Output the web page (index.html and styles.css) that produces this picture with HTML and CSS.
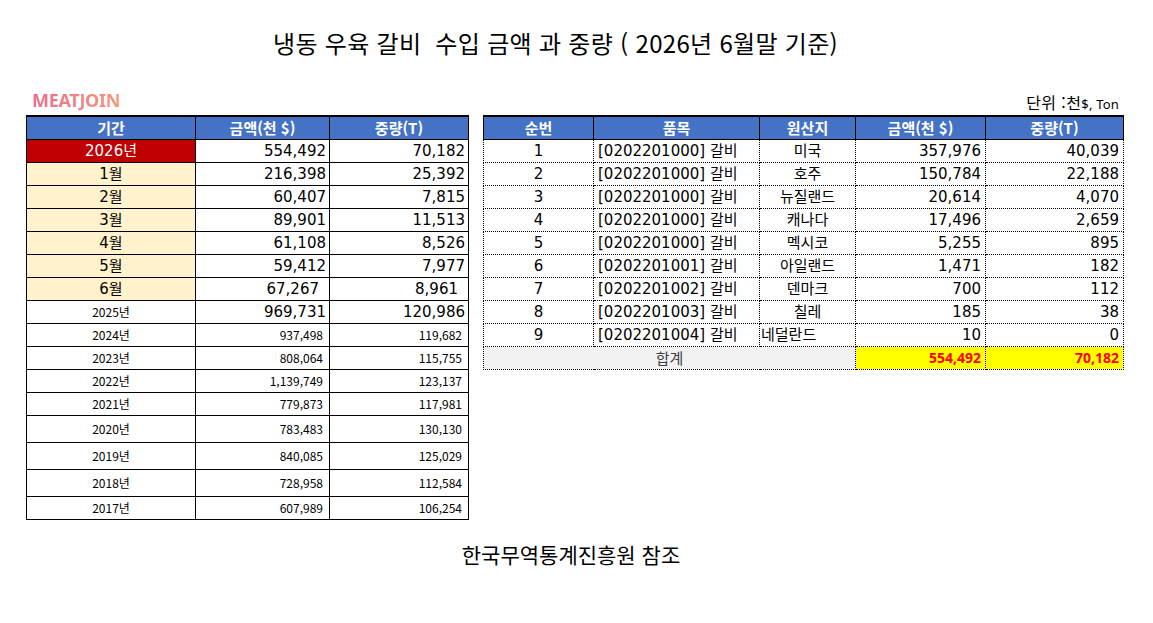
FILE: index.html
```html
<!DOCTYPE html>
<html lang="ko">
<head>
<meta charset="utf-8">
<title>냉동 우육 갈비 수입 금액 과 중량</title>
<link rel="stylesheet" href="styles.css">
</head>
<body>
<div class="page">
  <h1 class="title">냉동 우육 갈비&nbsp; 수입 금액 과 중량 ( 2026년 6월말 기준)</h1>
  <div class="main">
    <div class="left">
      <div class="logo">MEATJOIN</div>
      <table class="tbl-left">
        <colgroup><col class="c1"><col class="c2"><col class="c3"></colgroup>
        <thead>
          <tr><th>기간</th><th>금액(천 $)</th><th>중량(T)</th></tr>
        </thead>
        <tbody>
          <tr class="big"><td class="cur">2026년</td><td class="num">554,492</td><td class="num">70,182</td></tr>
          <tr class="big"><td class="mon">1월</td><td class="num">216,398</td><td class="num">25,392</td></tr>
          <tr class="big"><td class="mon">2월</td><td class="num">60,407</td><td class="num">7,815</td></tr>
          <tr class="big"><td class="mon">3월</td><td class="num">89,901</td><td class="num">11,513</td></tr>
          <tr class="big"><td class="mon">4월</td><td class="num">61,108</td><td class="num">8,526</td></tr>
          <tr class="big"><td class="mon">5월</td><td class="num">59,412</td><td class="num">7,977</td></tr>
          <tr class="big"><td class="mon">6월</td><td class="num trail">67,267</td><td class="num trail">8,961</td></tr>
          <tr class="mixed"><td class="yr">2025년</td><td class="num">969,731</td><td class="num">120,986</td></tr>
          <tr class="small"><td>2024년</td><td class="num">937,498</td><td class="num">119,682</td></tr>
          <tr class="small"><td>2023년</td><td class="num">808,064</td><td class="num">115,755</td></tr>
          <tr class="small"><td>2022년</td><td class="num">1,139,749</td><td class="num">123,137</td></tr>
          <tr class="small"><td>2021년</td><td class="num">779,873</td><td class="num">117,981</td></tr>
          <tr class="small tall"><td>2020년</td><td class="num">783,483</td><td class="num">130,130</td></tr>
          <tr class="small tall"><td>2019년</td><td class="num">840,085</td><td class="num">125,029</td></tr>
          <tr class="small tall"><td>2018년</td><td class="num">728,958</td><td class="num">112,584</td></tr>
          <tr class="small last"><td>2017년</td><td class="num">607,989</td><td class="num">106,254</td></tr>
        </tbody>
      </table>
    </div>
    <div class="right">
      <div class="unit">단위 :천<span class="unit-sm">$, Ton</span></div>
      <table class="tbl-right">
        <colgroup><col class="r1"><col class="r2"><col class="r3"><col class="r4"><col class="r5"></colgroup>
        <thead>
          <tr><th>순번</th><th>품목</th><th>원산지</th><th>금액(천 $)</th><th>중량(T)</th></tr>
        </thead>
        <tbody>
          <tr><td class="ctr">1</td><td class="item">[0202201000] 갈비</td><td class="ctr">미국</td><td class="num">357,976</td><td class="num">40,039</td></tr>
          <tr><td class="ctr">2</td><td class="item">[0202201000] 갈비</td><td class="ctr">호주</td><td class="num">150,784</td><td class="num">22,188</td></tr>
          <tr><td class="ctr">3</td><td class="item">[0202201000] 갈비</td><td class="ctr">뉴질랜드</td><td class="num">20,614</td><td class="num">4,070</td></tr>
          <tr><td class="ctr">4</td><td class="item">[0202201000] 갈비</td><td class="ctr">캐나다</td><td class="num">17,496</td><td class="num">2,659</td></tr>
          <tr><td class="ctr">5</td><td class="item">[0202201000] 갈비</td><td class="ctr">멕시코</td><td class="num">5,255</td><td class="num">895</td></tr>
          <tr><td class="ctr">6</td><td class="item">[0202201001] 갈비</td><td class="ctr">아일랜드</td><td class="num">1,471</td><td class="num">182</td></tr>
          <tr><td class="ctr">7</td><td class="item">[0202201002] 갈비</td><td class="ctr">덴마크</td><td class="num">700</td><td class="num">112</td></tr>
          <tr><td class="ctr">8</td><td class="item">[0202201003] 갈비</td><td class="ctr">칠레</td><td class="num">185</td><td class="num">38</td></tr>
          <tr><td class="ctr">9</td><td class="item">[0202201004] 갈비</td><td class="lft">네덜란드</td><td class="num">10</td><td class="num">0</td></tr>
          <tr class="total"><td colspan="3" class="sum-label">합계</td><td class="num sum">554,492</td><td class="num sum">70,182</td></tr>
        </tbody>
      </table>
    </div>
  </div>
  <div class="footer">한국무역통계진흥원 참조</div>
</div>
</body>
</html>
```
FILE: styles.css
```css
html, body {
  margin: 0;
  padding: 0;
  background: #ffffff;
}

body {
  font-family: "DejaVu Sans", "Noto Sans CJK KR", sans-serif;
  color: #000;
}

.page {
  width: 1153px;
  height: 623px;
  padding-top: 28px;
  box-sizing: border-box;
}

.title {
  width: 1111px;
  margin: 0;
  font-family: "Noto Sans CJK KR", sans-serif;
  font-weight: 400;
  font-size: 24px;
  letter-spacing: 0.3px;
  line-height: 30px;
  text-align: center;
  color: #000;
}

.main {
  display: flex;
  gap: 14px;
  padding-left: 26px;
  margin-top: 27px;
  align-items: flex-start;
}

.logo {
  height: 30px;
  line-height: 30px;
  padding-left: 6px;
  font-family: "Noto Sans", sans-serif;
  font-weight: 700;
  font-size: 18px;
  letter-spacing: -0.3px;
  background: linear-gradient(90deg, #f06a8c 0%, #f5967c 100%);
  -webkit-background-clip: text;
  background-clip: text;
  color: transparent;
  width: max-content;
}

.unit {
  height: 30px;
  box-sizing: border-box;
  padding-top: 6px;
  padding-right: 5px;
  text-align: right;
  font-family: "Noto Sans CJK KR", sans-serif;
  font-size: 16px;
  letter-spacing: 0.4px;
  line-height: 22px;
}

.unit-sm {
  font-family: "Noto Sans", sans-serif;
  font-size: 13px;
  letter-spacing: 0.2px;
}

table {
  border-collapse: collapse;
  table-layout: fixed;
}

th {
  background: #4472c4;
  color: #fff;
  font-family: "Noto Sans CJK KR", sans-serif;
  font-weight: 700;
  font-size: 15px;
  height: 22px;
  padding: 0;
  line-height: 20px;
  text-align: center;
}

td {
  padding: 0;
  white-space: nowrap;
  overflow: hidden;
}

/* Left table */
.tbl-left {
  width: 443px;
  border: 1px solid #000;
}

.tbl-left .c1 { width: 169px; }
.tbl-left .c2 { width: 134px; }
.tbl-left .c3 { width: 139px; }

.tbl-left th,
.tbl-left td {
  border: 1px solid #000;
}

.tbl-left th {
  border-top-width: 2px;
  height: 21px;
}

.tbl-left tr {
  height: 23px;
}

.tbl-left tr.tall {
  height: 27px;
}

.tbl-left td {
  text-align: center;
  font-size: 15px;
  line-height: 20px;
}

.tbl-left td.num {
  text-align: right;
  padding-right: 3px;
}

.tbl-left td.num.trail {
  padding-right: 10px;
}

.tbl-left td.cur {
  background: #c00000;
  color: #fff;
}

.tbl-left td.mon {
  background: #fff2cc;
}

.tbl-left td.yr,
.tbl-left tr.small td {
  font-family: "Noto Sans CJK KR", sans-serif;
  font-size: 12px;
}

.tbl-left tr.small td.num {
  padding-right: 6px;
}

/* Right table */
.tbl-right {
  width: 641px;
}

.tbl-right .r1 { width: 110px; }
.tbl-right .r2 { width: 166px; }
.tbl-right .r3 { width: 96px; }
.tbl-right .r4 { width: 130px; }
.tbl-right .r5 { width: 138px; }

.tbl-right th {
  border: 1px solid #000;
  border-top-width: 2px;
  border-bottom-width: 1px;
}

.tbl-right td {
  border: 1px dotted #000;
  height: 22px;
  font-size: 15px;
  line-height: 20px;
}

.tbl-right td.ctr { text-align: center; }
.tbl-right td.lft { text-align: left; padding-left: 1px; }
.tbl-right td.item { text-align: left; padding-left: 4px; }
.tbl-right td.num { text-align: right; padding-right: 4px; }

.tbl-right td.sum-label {
  background: #f2f2f2;
  color: #404040;
  text-align: center;
  font-family: "Noto Sans CJK KR", sans-serif;
  font-size: 15px;
}

.tbl-right td.sum {
  background: #ffff00;
  color: #ff0000;
  font-family: "Noto Sans", sans-serif;
  font-weight: 700;
  font-size: 14px;
}

.footer {
  width: 1142px;
  margin-top: 20px;
  text-align: center;
  font-family: "Noto Sans CJK KR", sans-serif;
  font-size: 21px;
  line-height: 28px;
}
```
